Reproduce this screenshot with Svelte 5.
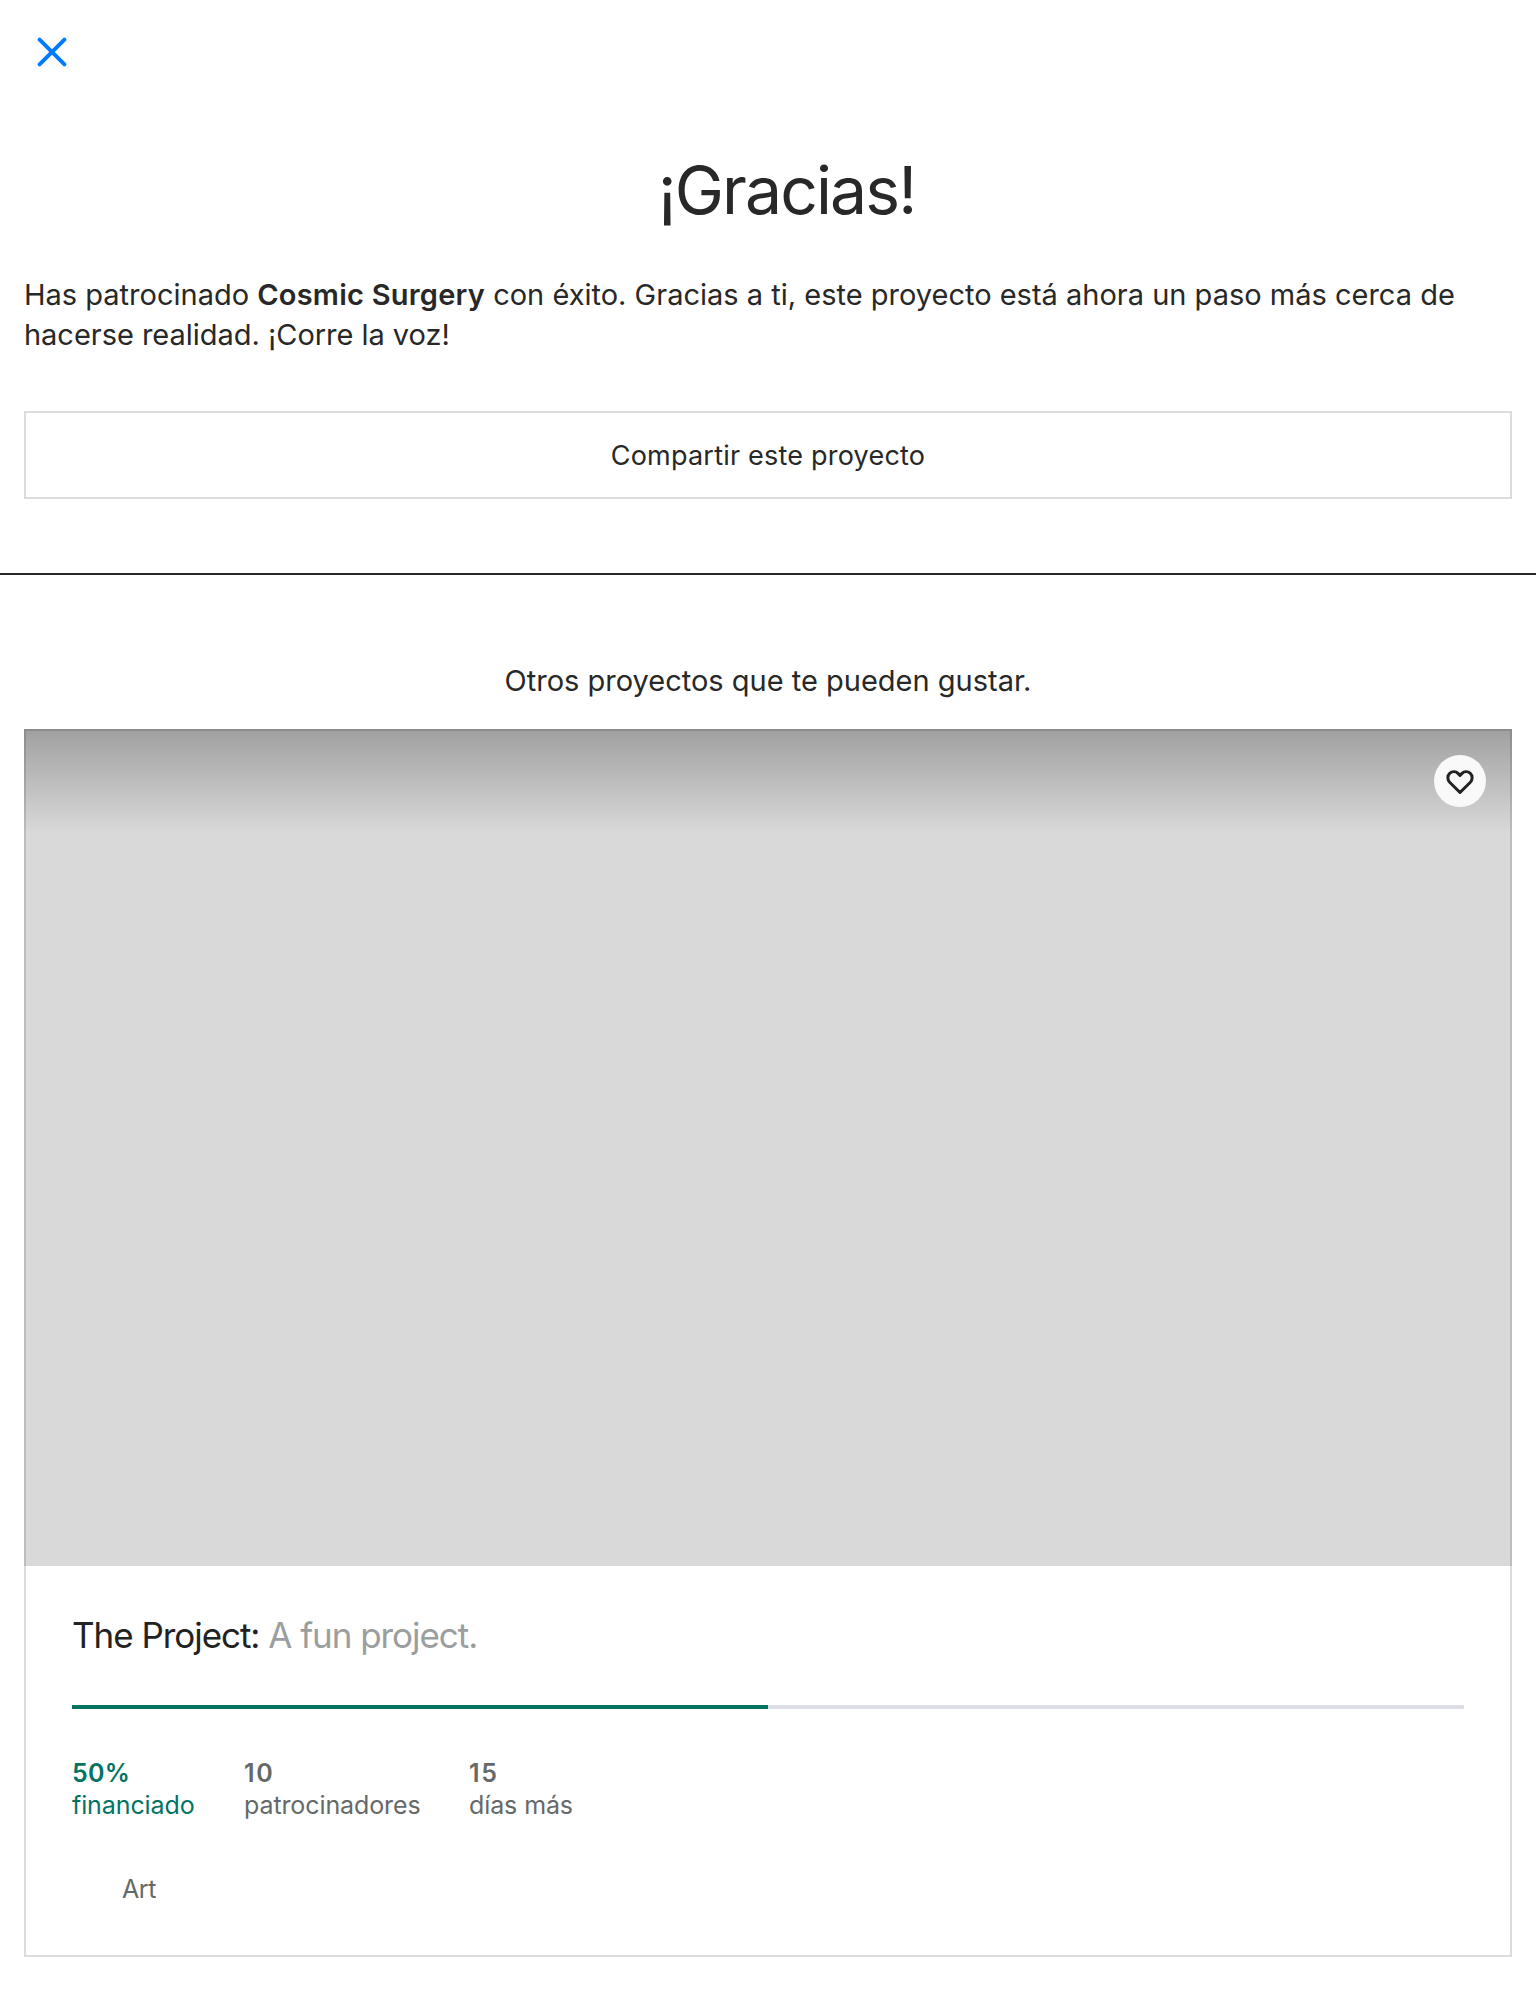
<script>
  const funded = 50;
  const stats = [
    { value: '50%', label: 'financiado', tone: 'funded' },
    { value: '10', label: 'patrocinadores', tone: 'backers' },
    { value: '15', label: 'días más', tone: 'days' }
  ];
</script>

<main class="page">
  <header class="bar">
    <button class="close" aria-label="Cerrar">
      <svg width="32" height="32" viewBox="0 0 32 32" fill="none" stroke="#007aff" stroke-width="4" stroke-linecap="round">
        <path d="M3.6 3.6 28.4 28.4M28.4 3.6 3.6 28.4" />
      </svg>
    </button>
  </header>

  <section class="thanks">
    <h1>¡Gracias!</h1>
    <p class="message">
      <span class="first">Has patrocinado <b>Cosmic Surgery</b> con éxito. Gracias a ti, este proyecto está ahora un paso más cerca de</span>
      <span class="second">hacerse realidad. ¡Corre la voz!</span>
    </p>
    <button class="share"><span>Compartir este proyecto</span></button>
  </section>

  <section class="more">
    <h2>Otros proyectos que te pueden gustar.</h2>
    <article class="card">
      <div class="photo">
        <button class="save" aria-label="Guardar">
          <svg width="32" height="32" viewBox="0 0 32 32" fill="none" stroke="#222" stroke-width="3" stroke-linejoin="round">
            <path d="M16 27.5 5.9 17.5C3.2 14.8 3.2 10.5 5.9 8.1C8.4 6 11.8 6.2 14 8.4L16 10.5L18 8.4C20.2 6.2 23.6 6 26.1 8.1C28.8 10.5 28.8 14.8 26.1 17.5Z" />
          </svg>
        </button>
      </div>
      <div class="body">
        <h3><span class="name">The Project:</span> <span class="blurb">A fun project.</span></h3>
        <div class="track"><div class="fill" style="width: {funded}%"></div></div>
        <div class="stats">
          {#each stats as s}
            <div class="stat {s.tone}"><strong>{s.value}</strong><span>{s.label}</span></div>
          {/each}
        </div>
        <div class="category">Art</div>
      </div>
    </article>
  </section>
</main>

<style>
  :global(body) { margin: 0; background: #fff; }
  .page {
    width: 1536px;
    height: 2000px;
    overflow: hidden;
    font-family: Inter, 'Liberation Sans', sans-serif;
    color: #282828;
    box-sizing: border-box;
  }
  button { font: inherit; color: inherit; background: none; border: 0; padding: 0; }
  h1, h2, h3, p { margin: 0; font-weight: 400; }
  svg { display: block; }
  .bar { height: 104px; padding: 36px 36px 0; box-sizing: border-box; }
  .thanks {
    height: 471px;
    padding: 46px 24px 0;
    box-sizing: border-box;
    border-bottom: 2px solid #282828;
  }
  h1 {
    height: 125px;
    padding-left: 37px;
    line-height: 80px;
    font-size: 66px;
    letter-spacing: -1.9px;
    text-align: center;
  }
  .message { height: 136px; font-size: 29px; line-height: 40px; }
  .message span { display: block; width: max-content; white-space: nowrap; }
  .message b { font-weight: 600; letter-spacing: 0.22px; }
  .message .second { letter-spacing: -0.03px; }
  .share {
    display: block;
    width: 100%;
    height: 88px;
    border: 2px solid #dcdcdc;
    font-size: 27px;
    letter-spacing: 0.21px;
  }
  .more { padding: 86px 24px 0; }
  h2 { height: 68px; line-height: 40px; font-size: 29px; text-align: center; }
  .card { height: 1228px; display: flex; flex-direction: column; position: relative; }
  .card::after {
    content: '';
    position: absolute;
    inset: 0;
    border: 2px solid rgba(40, 40, 40, 0.16);
    pointer-events: none;
  }
  .photo {
    height: 837px;
    display: flex;
    justify-content: flex-end;
    align-items: flex-start;
    padding: 26px;
    box-sizing: border-box;
    background: linear-gradient(#a0a0a0, #d9d9d9 104px);
  }
  .save {
    width: 52px;
    height: 52px;
    display: grid;
    place-items: center;
    border-radius: 50%;
    background: #f9f9f9;
  }
  .body { padding: 0 48px; }
  h3 { height: 139px; padding-top: 44px; box-sizing: border-box; line-height: 50px; font-size: 35px; letter-spacing: -1.04px; }
  .name { color: #222; }
  .blurb { color: #9b9e9e; }
  .track { height: 4px; background: #dcdee6; }
  .fill { height: 100%; background: #037362; }
  .stats { display: flex; padding-top: 48px; height: 132px; box-sizing: border-box; font-size: 25px; line-height: 32px; color: #656969; }
  .stat { display: flex; flex-direction: column; white-space: nowrap; letter-spacing: -0.1px; }
  .stat strong { font-weight: 600; letter-spacing: 1.8px; }
  .stat.funded strong { letter-spacing: 0.3px; }
  .funded { width: 172px; color: #037362; }
  .backers { width: 225px; }
  .category { padding: 32px 0 0 50px; font-size: 25px; line-height: 32px; color: #656969; letter-spacing: -0.4px; }
</style>
